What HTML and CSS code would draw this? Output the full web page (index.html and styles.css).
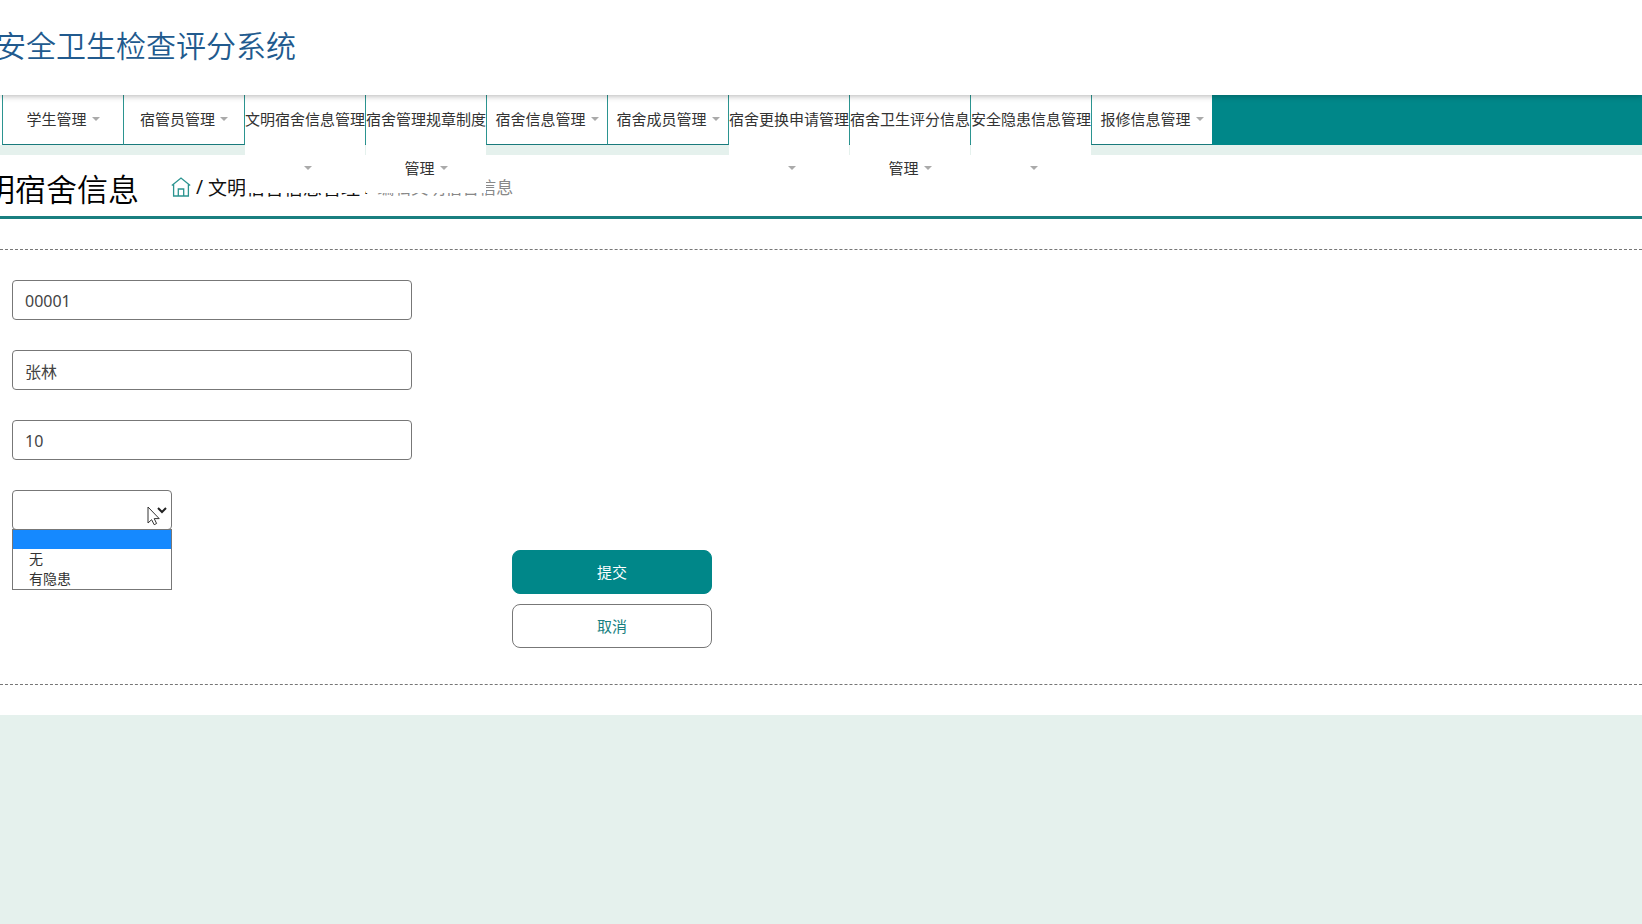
FILE: index.html
```html
<!DOCTYPE html>
<html lang="zh-CN">
<head>
<meta charset="utf-8">
<title>安全卫生检查评分系统</title>
<link rel="stylesheet" href="styles.css">
</head>
<body>
<header class="header"><span class="brand">安全卫生检查评分系统</span></header>
<nav class="nav">
  <ul class="menu">
    <li><a href="#">学生管理<i class="caret"></i></a></li>
    <li><a href="#">宿管员管理<i class="caret"></i></a></li>
    <li><a href="#">文明宿舍信息管理<i class="caret"></i></a></li>
    <li><a href="#">宿舍管理规章制度管理<i class="caret"></i></a></li>
    <li><a href="#">宿舍信息管理<i class="caret"></i></a></li>
    <li><a href="#">宿舍成员管理<i class="caret"></i></a></li>
    <li><a href="#">宿舍更换申请管理<i class="caret"></i></a></li>
    <li><a href="#">宿舍卫生评分信息管理<i class="caret"></i></a></li>
    <li><a href="#">安全隐患信息管理<i class="caret"></i></a></li>
    <li><a href="#">报修信息管理<i class="caret"></i></a></li>
  </ul>
</nav>
<main class="page">
  <div class="heading">
    <h1 class="title">明宿舍信息</h1>
    <div class="crumbs">
      <a href="#" class="home" aria-label="首页"><svg width="20" height="20" viewBox="0 0 20 20" fill="none" stroke="#2b9490" stroke-width="1.3"><path d="M.8 8.4 10 1l9.2 7.4M2.6 7v12h14.8V7M7.3 19v-7h5.4v7"/></svg></a>
      <span>/</span>
      <a href="#">文明宿舍信息管理</a>
      <span>/</span>
      <span class="current">编辑文明宿舍信息</span>
    </div>
  </div>
  <form class="form">
    <input class="field" type="text" value="00001" aria-label="宿舍编号">
    <input class="field" type="text" value="张林" aria-label="姓名">
    <input class="field" type="text" value="10" aria-label="评分">
    <div class="picker">
      <select class="field" aria-label="安全隐患">
        <option></option>
        <option>无</option>
        <option>有隐患</option>
      </select>
      <svg class="chevron" width="10" height="7" viewBox="0 0 10 7" fill="none" stroke="#222" stroke-width="2"><path d="M1 1l4 4 4-4"/></svg>
      <ul class="options">
        <li class="active"></li>
        <li>无</li>
        <li>有隐患</li>
      </ul>
      <svg class="pointer" width="14" height="20" viewBox="0 0 14 20" fill="#fff" stroke="#333"><path d="M1 1v16l3.6-3.3 2.6 5 2.4-1.2-2.4-4.9h5z"/></svg>
    </div>
    <div class="actions">
      <button type="submit" class="btn primary">提交</button>
      <button type="button" class="btn">取消</button>
    </div>
  </form>
</main>
</body>
</html>
```
FILE: styles.css
```css
* { box-sizing: border-box; }
body {
  margin: 0;
  background: #e5f1ed;
  color: #333;
  font-family: "Noto Sans", "Noto Sans CJK SC", sans-serif;
  font-size: 15px;
  overflow-x: hidden;
}
a { color: inherit; text-decoration: none; }
ul { margin: 0; padding: 0; list-style: none; }

.header {
  position: relative;
  z-index: 3;
  display: flex;
  align-items: center;
  height: 95px;
  padding-bottom: 8px;
  background: #fff;
  box-shadow: 0 1px 6px rgba(0, 0, 0, .3);
}
.brand {
  margin-left: -4px;
  color: #215a8e;
  font-family: "Noto Sans CJK SC", sans-serif;
  font-size: 30px;
  font-weight: 350;
  white-space: nowrap;
}

.nav {
  position: relative;
  z-index: 2;
  display: flex;
  height: 50px;
  background: #008789;
}
.menu { display: flex; padding-left: 2px; background: #fff; }
.menu li {
  flex: none;
  width: 121px;
  height: 50px;
  border-left: 1px solid #2b9490;
  border-bottom: 1px solid #197a7c;
}
.menu a {
  display: block;
  background: #fff;
  line-height: 49px;
  text-align: center;
}
.caret {
  display: inline-block;
  margin-left: 5px;
  border: 4px solid transparent;
  border-top-color: #aaa;
  border-bottom: 0;
  vertical-align: 4px;
}

.page { margin-top: 10px; padding-bottom: 30px; background: #fff; }
.heading {
  display: flex;
  align-items: center;
  height: 64px;
  border-bottom: 3px solid #197f80;
  color: #111;
  white-space: nowrap;
}
.title {
  margin: 4px 0 0 -16px;
  color: #000;
  font-family: "Noto Sans CJK SC", sans-serif;
  font-size: 31px;
  font-weight: 350;
}
.crumbs {
  display: flex;
  align-items: center;
  gap: 5px;
  margin-left: 32px;
  padding-top: 2px;
  font-size: 19px;
}
.home { display: flex; }
.current { color: #888; font-size: 17px; }

.form {
  display: flex;
  flex-direction: column;
  gap: 30px;
  margin-top: 30px;
  padding: 30px 12px 36px;
  border: 1px dashed #777;
  border-width: 1px 0;
}
.field {
  display: block;
  width: 400px;
  height: 40px;
  padding: 1px 12px 0;
  border: 1px solid #777;
  border-radius: 4px;
  background: #fff;
  color: #444;
  font-family: inherit;
  font-size: 16px;
}
.picker { position: relative; width: 160px; }
.picker .field { width: 100%; appearance: none; }
.chevron { position: absolute; right: 5px; top: 17px; }
.options {
  position: absolute;
  top: 39px;
  left: 0;
  width: 100%;
  border: 1px solid #777;
  background: #fff;
  font-size: 14px;
  line-height: 20px;
}
.options li { height: 20px; padding-left: 16px; }
.options .active { height: 19px; background: #1589ff; }
.pointer { position: absolute; left: 135px; top: 16px; }
.actions {
  display: flex;
  flex-direction: column;
  gap: 10px;
  width: 200px;
  margin: -10px 0 0 500px;
}
.btn {
  height: 44px;
  padding: 0 0 2px;
  border: 1px solid #777;
  border-radius: 8px;
  background: #fff;
  color: #197f80;
  font-family: inherit;
  font-size: 15px;
}
.primary { border-color: #008789; background: #008789; color: #fff; }
```
